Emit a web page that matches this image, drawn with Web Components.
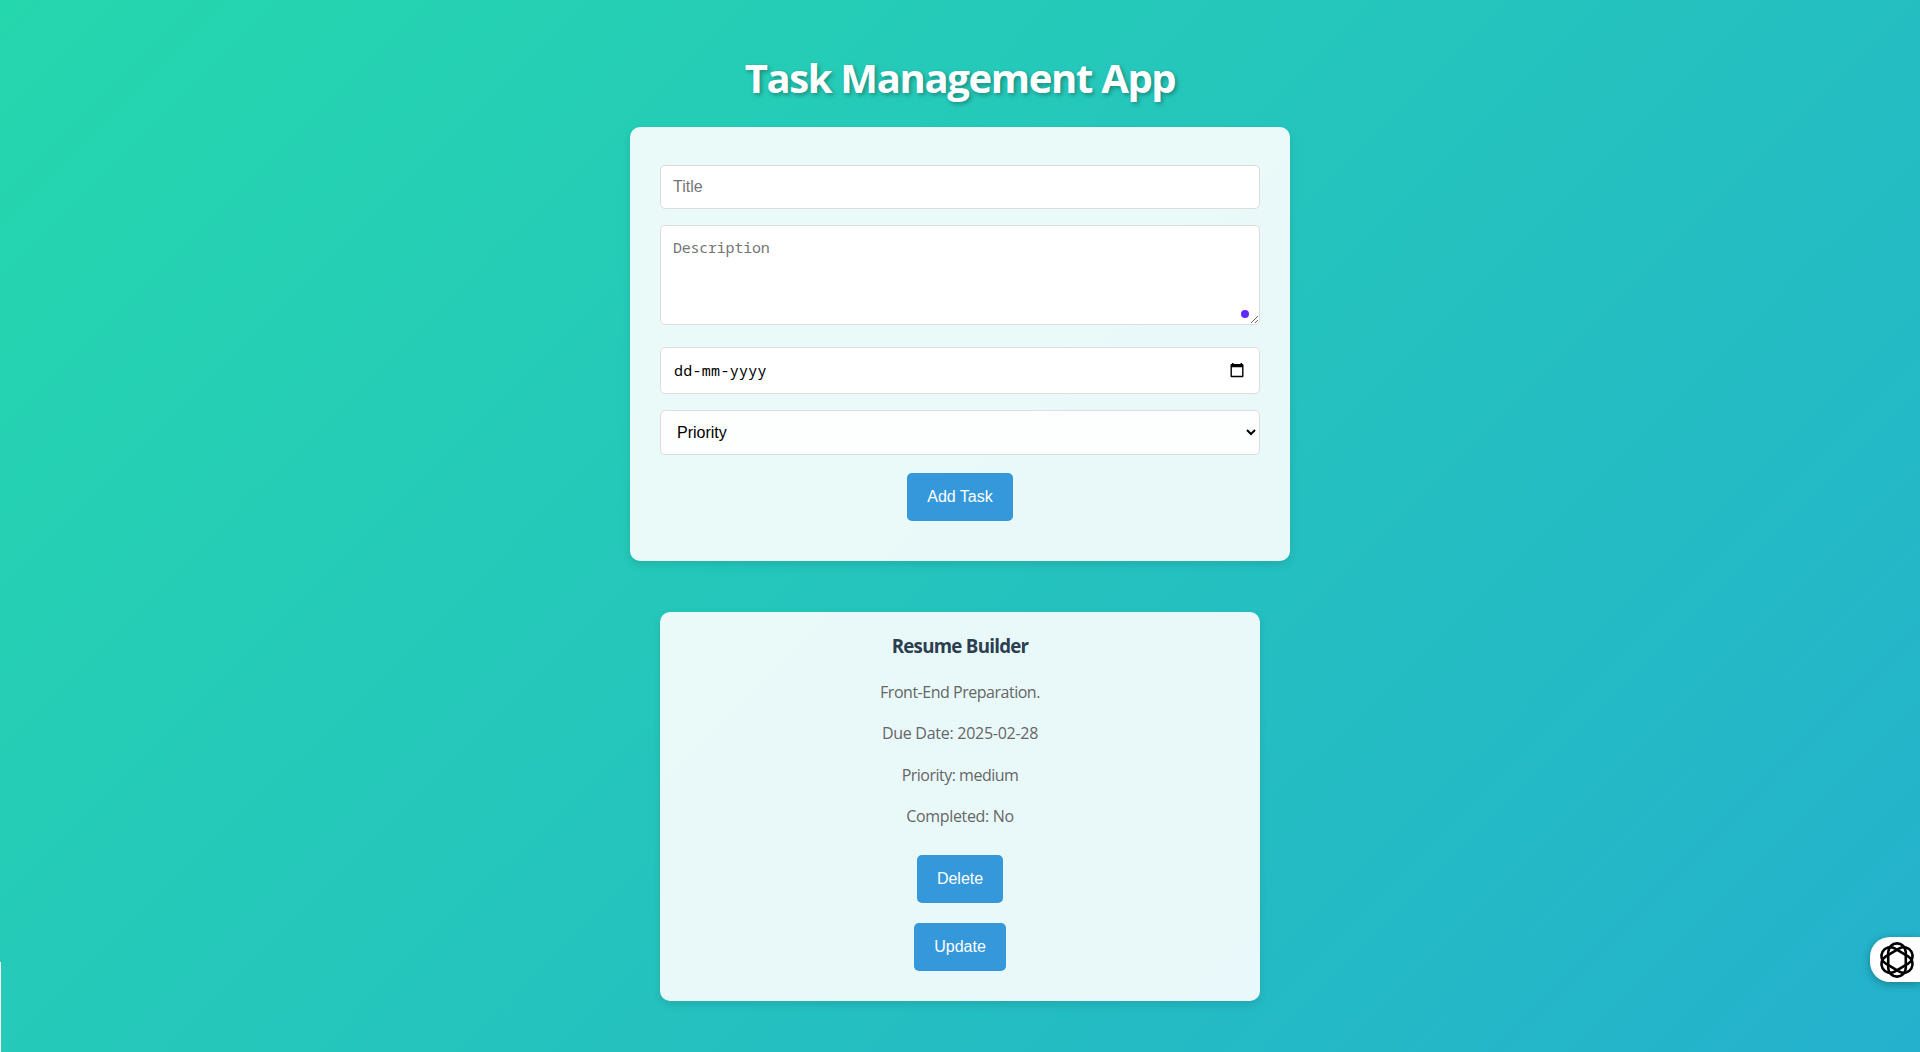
<!DOCTYPE html>
<html lang="en">
<head>
<meta charset="utf-8">
<title>Task Management App</title>
<style>
body{margin:0;height:1052px;overflow:hidden;font-family:"Open Sans","Noto Sans",sans-serif;}
</style>
</head>
<body>
<task-app></task-app>
<script>
const define=(name,css,html)=>customElements.define(name,class extends HTMLElement{
  constructor(){super();this.attachShadow({mode:'open'}).innerHTML=`<style>*{box-sizing:border-box}${css}</style>${html}`;}
});

define('app-heading',`
:host{display:block;height:127px;padding-top:49px;text-align:center}
h1{margin:0;font-size:40px;line-height:58px;font-weight:700;color:#fff;letter-spacing:-1.34px;text-shadow:2px 2px 4px rgba(0,0,0,.3)}`,
`<h1><slot></slot></h1>`);

define('action-button',`
:host{display:block}
button{display:block;height:48px;padding:0 20px;border:0;border-radius:5px;background:#3498db;color:#fff;font:16px/48px "Liberation Sans",Arial,sans-serif;white-space:nowrap}`,
`<button type="button"><slot></slot></button>`);

define('panel-card',`
:host{display:flex;flex-direction:column;align-items:center;box-sizing:border-box;background:rgba(255,255,255,.9);border-radius:10px;box-shadow:0 4px 8px rgba(0,0,0,.1)}`,
`<slot></slot>`);

define('task-form',`
:host{display:block;width:660px}
panel-card{height:434px;padding:38px 30px 0}
input,textarea,.date,select{display:block;width:600px;margin:0;border:1px solid #ddd;border-radius:5px;background:#fff;color:#000}
input{height:44px;padding:0 12px;font:16px "Liberation Sans",Arial,sans-serif}
textarea{height:100px;padding:11px 12px;font:15px/20px "Noto Sans Mono","DejaVu Sans Mono",monospace;resize:both;letter-spacing:-.23px}
::placeholder{color:#757575}
.area{position:relative;margin:16px 0 22px}
.dot{position:absolute;left:581px;top:85px;width:8px;height:8px;border-radius:50%;background:#6128ff}
.date{height:47px;padding:0 15px 0 13px;display:flex;align-items:center;justify-content:space-between;font:15px "Noto Sans Mono","DejaVu Sans Mono",monospace;letter-spacing:.28px}
.date span{padding-bottom:2px}
.date svg{display:block}
select{height:45px;margin:16px 0 18px;padding:0 12px;font:16px "Liberation Sans",Arial,sans-serif;background:rgba(255,255,255,.9)}`,
`<panel-card>
<input placeholder="Title">
<div class="area"><textarea placeholder="Description"></textarea><i class="dot"></i></div>
<div class="date"><span>dd-mm-yyyy</span><svg width="14" height="15" viewBox="0 0 14 15"><path fill-rule="evenodd" d="M2 0h1.5v1h7V0H12v1h.8l.7.8v11.7l-.7.8H1.2l-.7-.8V1.8l.7-.8H2zM1.9 4.3v8.5h10.2V4.3z"/></svg></div>
<select><option>Priority</option></select>
<action-button>Add Task</action-button>
</panel-card>`);

define('task-item',`
:host{display:block;width:600px;margin-top:51px}
panel-card{height:389px;padding-top:20px}
h3{margin:0 0 20px;font-size:18.72px;line-height:28px;color:#2c3e50;letter-spacing:-.73px}
.rows{display:flex;flex-direction:column;gap:17.4px;align-items:center;font-size:16px;line-height:24px;color:#666;margin-bottom:27px}
.buttons{display:flex;flex-direction:column;align-items:center;gap:20px}`,
`<panel-card><h3><slot name="title"></slot></h3>
<div class="rows"><slot></slot></div>
<div class="buttons"><action-button>Delete</action-button><action-button>Update</action-button></div></panel-card>`);

customElements.define('assistant-tab',class extends HTMLElement{
  constructor(){
    super();
    const loops=[0,60,120].map(a=>`<rect x="-8.8" y="-16.6" width="17.6" height="33.2" rx="8.8" ry="8.8" transform="rotate(${a})"/>`).join('');
    this.attachShadow({mode:'open'}).innerHTML=`<style>
:host{position:absolute;right:0;top:937px;width:50px;height:45px;box-sizing:border-box;padding:4px 0 0 9px;background:#fff;border-radius:20px 0 0 20px;box-shadow:0 2px 8px rgba(0,0,0,.3)}
svg{display:block}</style>
<svg width="36" height="38" viewBox="-18 -19 36 38" fill="none" stroke="#000" stroke-width="2.6">${loops}</svg>`;
  }
});

define('task-app',`
:host{display:flex;flex-direction:column;align-items:center;position:relative;height:1052px;background:linear-gradient(135deg,#25d7ad,#24b1cd)}
.edge{position:absolute;left:0;top:962px;width:1px;height:90px;background:#fff}
p{margin:0;letter-spacing:-.48px}
.due{letter-spacing:-.27px}
.priority{letter-spacing:-.5px}
.done{letter-spacing:-.32px}`,
`<app-heading>Task Management App</app-heading>
<task-form></task-form>
<task-item><span slot="title">Resume Builder</span><p>Front-End Preparation.</p><p class="due">Due Date: 2025-02-28</p><p class="priority">Priority: medium</p><p class="done">Completed: No</p></task-item>
<i class="edge"></i><assistant-tab></assistant-tab>`);
</script>
</body>
</html>
